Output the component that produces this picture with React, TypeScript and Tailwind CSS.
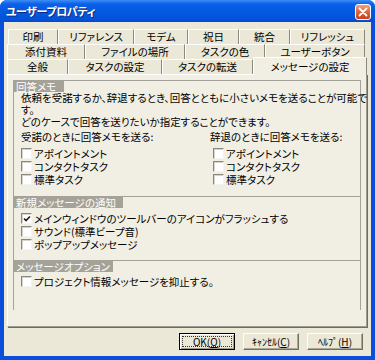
import React from "react";

function Cb({ checked }: { checked?: boolean }) {
  return (
    <span className="relative inline-block h-[11px] w-[11px] shrink-0 border border-t-[#8a887e] border-l-[#8a887e] border-b-[#f4f3ee] border-r-[#f4f3ee] bg-white shadow-[inset_1px_1px_0_#d6d4cb]">
      {checked && (
        <svg className="absolute left-[1px] top-[1px]" width="8" height="8" viewBox="0 0 8 8">
          <path d="M1 3.5 L3 5.5 L7 1.5" fill="none" stroke="#1a1a1a" strokeWidth="1.6" />
        </svg>
      )}
    </span>
  );
}

function CbRow({ label, checked }: { label: string; checked?: boolean }) {
  return (
    <div className="flex h-[13px] items-center gap-[2px] whitespace-nowrap">
      <Cb checked={checked} />
      <span className="leading-[12px]">{label}</span>
    </div>
  );
}

function Tab({ label, w }: { label: string; w: string }) {
  return (
    <div
      className={`${w} flex h-full items-center justify-center whitespace-nowrap border-l border-r border-t border-l-white border-t-white border-r-[#8c8a80] bg-[#ebe8d7] leading-[12px]`}
    >
      {label}
    </div>
  );
}

export default function App() {
  return (
    <div className="flex h-[360px] w-[375px] flex-col overflow-hidden rounded-t-[7px] bg-[#0a4fdc] font-['Noto_Sans_CJK_JP',sans-serif] text-[10.5px] text-black [font-feature-settings:'palt']">
      {/* Title bar */}
      <div className="flex h-[22px] shrink-0 items-center justify-between bg-[linear-gradient(to_bottom,#3d8ff7_0%,#0b60e8_18%,#0458e0_55%,#0252dc_88%,#0a48c4_100%)] pl-[6px] pr-[4px]">
        <span className="text-[11px] font-bold leading-none tracking-[-0.4px] text-white [text-shadow:1px_1px_0_#0a2a80]">
          ユーザープロパティ
        </span>
        <div className="mt-[1px] flex h-[16px] w-[16px] items-center justify-center rounded-[3px] border border-white bg-[linear-gradient(to_bottom,#f0a080_0%,#e06a40_45%,#c8401a_100%)]">
          <svg width="10" height="10" viewBox="0 0 10 10">
            <path d="M1.5 1.5 L8.5 8.5 M8.5 1.5 L1.5 8.5" stroke="white" strokeWidth="1.8" strokeLinecap="round" />
          </svg>
        </div>
      </div>

      {/* Body */}
      <div className="mx-[4px] mb-[4px] flex flex-1 flex-col bg-[#ebe8d7] pl-[3px] pr-[4px] pt-[7px] pb-[6px]">
        {/* Tabs */}
        <div className="flex h-[15px] pl-[1px]">
          <Tab label="印刷" w="w-[50px]" />
          <Tab label="リファレンス" w="w-[76px]" />
          <Tab label="モデム" w="w-[54px]" />
          <Tab label="祝日" w="w-[51px]" />
          <Tab label="統合" w="w-[51px]" />
          <Tab label="リフレッシュ" w="w-[75px]" />
        </div>
        <div className="flex h-[15px]">
          <Tab label="添付資料" w="w-[78px]" />
          <Tab label="ファイルの場所" w="w-[100px]" />
          <Tab label="タスクの色" w="w-[80px]" />
          <Tab label="ユーザーボタン" w="w-[100px]" />
        </div>
        <div className="flex h-[15px]">
          <Tab label="全般" w="w-[61px]" />
          <Tab label="タスクの設定" w="w-[94px]" />
          <Tab label="タスクの転送" w="w-[91px]" />
          <div className="relative z-10 -mb-px flex h-[18px] w-[114px] items-center justify-center self-end whitespace-nowrap border-l border-r border-t border-l-white border-t-white border-r-[#8c8a80] bg-[#f1efe4] leading-[12px]">
            メッセージの設定
          </div>
        </div>

        {/* Panel */}
        <div className="h-[253px] border border-b-[#9d9b8f] border-l-white border-r-[#9d9b8f] border-t-white bg-[#f1efe4] px-[5px] pt-[5px] shadow-[1px_1px_0_#6f6d62]">
          <div className="flex h-[230px] flex-col border-l border-r border-[#a3a19a]">
            {/* Section 1 */}
            <div className="h-[116px] border-t border-[#a3a19a]">
              <div className="h-[11px] w-[50px] whitespace-nowrap bg-[#a5a398] pl-[2px] leading-[11px] text-white">
                回答メモ
              </div>
              <div className="pl-[7px]">
                <p className="h-[12px] whitespace-nowrap leading-[12px]">
                  依頼を受諾するか、辞退するとき、回答とともに小さいメモを送ることが可能で
                </p>
                <p className="h-[12px] whitespace-nowrap leading-[12px]">す。</p>
                <p className="h-[12px] whitespace-nowrap leading-[12px]">
                  どのケースで回答を送りたいか指定することができます。
                </p>
                <div className="mt-[3px] grid grid-cols-[189px_1fr]">
                  <div>
                    <p className="h-[12px] whitespace-nowrap leading-[12px]">受諾のときに回答メモを送る:</p>
                    <div className="mt-[4px]">
                      <CbRow label="アポイントメント" />
                      <CbRow label="コンタクトタスク" />
                      <CbRow label="標準タスク" />
                    </div>
                  </div>
                  <div>
                    <p className="h-[12px] whitespace-nowrap leading-[12px]">辞退のときに回答メモを送る:</p>
                    <div className="mt-[4px] pl-[3px]">
                      <CbRow label="アポイントメント" />
                      <CbRow label="コンタクトタスク" />
                      <CbRow label="標準タスク" />
                    </div>
                  </div>
                </div>
              </div>
            </div>

            {/* Section 2 */}
            <div className="h-[64px] border-t border-[#a3a19a]">
              <div className="h-[11px] w-[109px] whitespace-nowrap bg-[#a5a398] pl-[2px] leading-[11px] text-white">
                新規メッセージの通知
              </div>
              <div className="mt-[4px] pl-[7px]">
                <CbRow label="メインウィンドウのツールバーのアイコンがフラッシュする" checked />
                <CbRow label="サウンド(標準ビープ音)" />
                <CbRow label="ポップアップメッセージ" />
              </div>
            </div>

            {/* Section 3 */}
            <div className="flex-1 border-t border-[#a3a19a]">
              <div className="h-[11px] w-[99px] whitespace-nowrap bg-[#a5a398] pl-[2px] leading-[11px] text-white">
                メッセージオプション
              </div>
              <div className="mt-[3px] pl-[7px]">
                <CbRow label="プロジェクト情報メッセージを抑止する。" />
              </div>
            </div>
          </div>
        </div>

        {/* Buttons */}
        <div className="mt-[6px] flex h-[17px] justify-end gap-[8px] pr-[4px] text-[10px]">
          <div className="flex w-[56px] items-center justify-center border border-black bg-[#ebe8d7] p-[2px] shadow-[inset_1px_1px_0_#fff,inset_-1px_-1px_0_#9d9b8f]">
            <div className="flex h-full w-full items-center justify-center border border-dotted border-[#333] leading-none">
              OK(<span className="underline">O</span>)
            </div>
          </div>
          <div className="flex w-[56px] items-center justify-center border border-b-[#716f64] border-l-white border-r-[#716f64] border-t-white bg-[#ebe8d7] leading-none shadow-[inset_-1px_-1px_0_#aca899]">
            ｷｬﾝｾﾙ(<span className="underline">C</span>)
          </div>
          <div className="flex w-[56px] items-center justify-center border border-b-[#716f64] border-l-white border-r-[#716f64] border-t-white bg-[#ebe8d7] leading-none shadow-[inset_-1px_-1px_0_#aca899]">
            ﾍﾙﾌﾟ(<span className="underline">H</span>)
          </div>
        </div>
      </div>
    </div>
  );
}
